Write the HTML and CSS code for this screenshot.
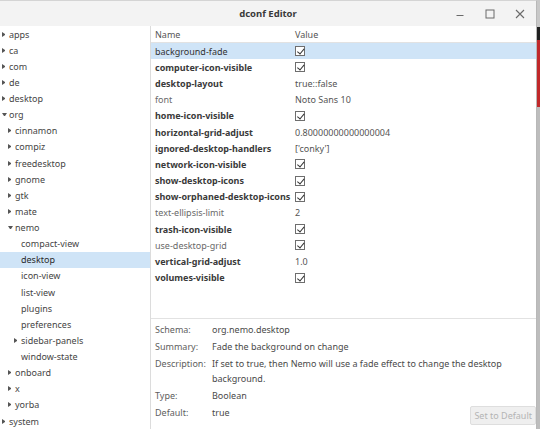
FILE: index.html
```html
<!DOCTYPE html>
<html>
<head>
<meta charset="utf-8">
<title>dconf Editor</title>
<link rel="stylesheet" href="styles.css">
</head>
<body>
<div class="screen">
  <div class="window">
    <div class="titlebar">
      <div></div>
      <div class="title">dconf Editor</div>
      <div class="controls">
        <span class="ctl"><svg width="10" height="10" viewBox="0 0 10 10"><path d="M1.5 6.5 H8.5" stroke="#6a6a6a" stroke-width="1"/></svg></span>
        <span class="ctl"><svg width="10" height="10" viewBox="0 0 10 10"><rect x="1" y="1" width="8" height="8" fill="none" stroke="#6a6a6a" stroke-width="1"/></svg></span>
        <span class="ctl"><svg width="10" height="10" viewBox="0 0 10 10"><path d="M1 1 L9 9 M9 1 L1 9" stroke="#6a6a6a" stroke-width="1.1"/></svg></span>
      </div>
    </div>
    <div class="main">
      <div class="sidebar">
        <div class="node l0"><i class="arrow r"></i>apps</div>
        <div class="node l0"><i class="arrow r"></i>ca</div>
        <div class="node l0"><i class="arrow r"></i>com</div>
        <div class="node l0"><i class="arrow r"></i>de</div>
        <div class="node l0"><i class="arrow r"></i>desktop</div>
        <div class="node l0"><i class="arrow d"></i>org</div>
        <div class="node l1"><i class="arrow r"></i>cinnamon</div>
        <div class="node l1"><i class="arrow r"></i>compiz</div>
        <div class="node l1"><i class="arrow r"></i>freedesktop</div>
        <div class="node l1"><i class="arrow r"></i>gnome</div>
        <div class="node l1"><i class="arrow r"></i>gtk</div>
        <div class="node l1"><i class="arrow r"></i>mate</div>
        <div class="node l1"><i class="arrow d"></i>nemo</div>
        <div class="node l2"><i class="arrow none"></i>compact-view</div>
        <div class="node l2 selected"><i class="arrow none"></i>desktop</div>
        <div class="node l2"><i class="arrow none"></i>icon-view</div>
        <div class="node l2"><i class="arrow none"></i>list-view</div>
        <div class="node l2"><i class="arrow none"></i>plugins</div>
        <div class="node l2"><i class="arrow none"></i>preferences</div>
        <div class="node l2"><i class="arrow r"></i>sidebar-panels</div>
        <div class="node l2"><i class="arrow none"></i>window-state</div>
        <div class="node l1"><i class="arrow r"></i>onboard</div>
        <div class="node l1"><i class="arrow r"></i>x</div>
        <div class="node l1"><i class="arrow r"></i>yorba</div>
        <div class="node l0"><i class="arrow r"></i>system</div>
      </div>
      <div class="content">
        <div class="table">
          <div class="row header"><span class="name">Name</span><span class="value">Value</span></div>
          <div class="row selected"><span class="name plain dark">background-fade</span><span class="value"><i class="check"></i></span></div>
          <div class="row"><span class="name">computer-icon-visible</span><span class="value"><i class="check"></i></span></div>
          <div class="row"><span class="name">desktop-layout</span><span class="value">true::false</span></div>
          <div class="row"><span class="name plain">font</span><span class="value">Noto Sans 10</span></div>
          <div class="row"><span class="name">home-icon-visible</span><span class="value"><i class="check"></i></span></div>
          <div class="row"><span class="name">horizontal-grid-adjust</span><span class="value">0.80000000000000004</span></div>
          <div class="row"><span class="name">ignored-desktop-handlers</span><span class="value">['conky']</span></div>
          <div class="row"><span class="name">network-icon-visible</span><span class="value"><i class="check"></i></span></div>
          <div class="row"><span class="name">show-desktop-icons</span><span class="value"><i class="check"></i></span></div>
          <div class="row"><span class="name">show-orphaned-desktop-icons</span><span class="value"><i class="check"></i></span></div>
          <div class="row"><span class="name plain">text-ellipsis-limit</span><span class="value">2</span></div>
          <div class="row"><span class="name">trash-icon-visible</span><span class="value"><i class="check"></i></span></div>
          <div class="row"><span class="name plain">use-desktop-grid</span><span class="value"><i class="check"></i></span></div>
          <div class="row"><span class="name">vertical-grid-adjust</span><span class="value">1.0</span></div>
          <div class="row"><span class="name">volumes-visible</span><span class="value"><i class="check"></i></span></div>
        </div>
        <div class="details">
          <span class="label">Schema:</span><span class="info">org.nemo.desktop</span>
          <span class="label">Summary:</span><span class="info">Fade the background on change</span>
          <span class="label">Description:</span><span class="info">If set to true, then Nemo will use a fade effect to change the desktop background.</span>
          <span class="label">Type:</span><span class="info">Boolean</span>
          <span class="label">Default:</span><span class="info last"><span>true</span><button class="reset" disabled>Set to Default</button></span>
        </div>
      </div>
    </div>
  </div>
  <div class="backdrop"></div>
</div>
</body>
</html>
```
FILE: styles.css
```css
html, body {
  margin: 0;
  padding: 0;
}
body {
  width: 540px;
  height: 429px;
  overflow: hidden;
  font-family: "Noto Sans", "DejaVu Sans", sans-serif;
  font-size: 9px;
  color: #3c3c3c;
  background: #d8d8d8;
}
.screen {
  display: flex;
  width: 540px;
  height: 429px;
}
.window {
  width: 537px;
  height: 429px;
  display: flex;
  flex-direction: column;
  background: #ffffff;
  border-right: 1px solid #b8b8b8;
  border-top: 1px solid #d4d4d4;
  box-sizing: border-box;
}
.backdrop {
  width: 3px;
  height: 429px;
  background: linear-gradient(to bottom, #c8c8c8 0, #c8c8c8 27px, #202020 27px, #202020 40px, #c0282a 40px, #c0282a 107px, #bdbdbd 107px);
}
.titlebar {
  height: 25px;
  display: grid;
  grid-template-columns: 1fr auto 1fr;
  align-items: center;
  background: #f3f3f3;
  flex: none;
}
.title {
  font-weight: bold;
  font-size: 9.5px;
  color: #3a3a3a;
}
.controls {
  display: flex;
  justify-content: flex-end;
  align-items: center;
  padding-right: 1px;
}
.ctl {
  width: 30px;
  height: 20px;
  display: flex;
  align-items: center;
  justify-content: center;
}
.main {
  flex: 1;
  display: flex;
  min-height: 0;
}
.sidebar {
  flex: none;
  border-right: 1px solid #dcdcdc;
  box-sizing: border-box;
  width: 151px;
}
.node {
  height: 16.125px;
  display: flex;
  align-items: center;
  color: #454545;
  white-space: nowrap;
}
.node.selected {
  background: #cfe4f7;
  color: #2a2a2a;
}
.l0 { padding-left: 2px; }
.l1 { padding-left: 8px; }
.l2 { padding-left: 14px; }
.arrow {
  display: inline-block;
  width: 3px;
  height: 5px;
  margin-right: 4px;
  box-sizing: border-box;
}
.arrow.r {
  border-left: 3px solid #555;
  border-top: 2.5px solid transparent;
  border-bottom: 2.5px solid transparent;
}
.arrow.d {
  width: 5px;
  height: 3px;
  margin-right: 2px;
  border-top: 3px solid #555;
  border-left: 2.5px solid transparent;
  border-right: 2.5px solid transparent;
}
.content {
  flex: 1;
  display: flex;
  flex-direction: column;
  min-width: 0;
}
.table {
  flex: 1;
}
.row {
  display: grid;
  grid-template-columns: 144px 1fr;
  height: 16.2px;
  align-items: center;
  white-space: nowrap;
}
.row.header {
  height: 17px;
  border-bottom: 1px solid #e2e2e2;
  box-sizing: border-box;
  color: #555;
}
.row.selected {
  background: #cfe4f7;
}
.name {
  padding-left: 4px;
  font-weight: bold;
  color: #3a3a3a;
  overflow: visible;
}
.name.plain {
  font-weight: normal;
  color: #6a6a6a;
}
.name.plain.dark {
  color: #333;
}
.row.header .name {
  font-weight: normal;
  color: #555;
}
.value {
  color: #555;
  display: flex;
  align-items: center;
}
.check {
  display: inline-block;
  width: 10px;
  height: 10px;
  box-sizing: border-box;
  border: 1px solid #6e6e6e;
  position: relative;
  background: #fff;
}
.check::after {
  content: "";
  position: absolute;
  left: 2.5px;
  top: 0px;
  width: 2.5px;
  height: 5.5px;
  border-right: 1.3px solid #333;
  border-bottom: 1.3px solid #333;
  transform: rotate(40deg);
}
.details {
  height: 111px;
  box-sizing: border-box;
  border-top: 1px solid #e2e2e2;
  padding: 3px 0 0 4px;
  display: grid;
  grid-template-columns: 57px 1fr;
  row-gap: 2px;
  align-content: start;
  line-height: 15px;
  color: #555;
}
.label {
  color: #5e5e5e;
}
.info {
  color: #4a4a4a;
}
.info.last {
  display: flex;
  justify-content: space-between;
  align-items: flex-start;
}
.reset {
  font-family: inherit;
  font-size: 9px;
  color: #b4b4b4;
  background: #efefef;
  border: 1px solid #dedede;
  border-radius: 2px;
  height: 19px;
  padding: 0 3px;
  margin-top: 1px;
  margin-right: 0;
  line-height: 17px;
}
```
